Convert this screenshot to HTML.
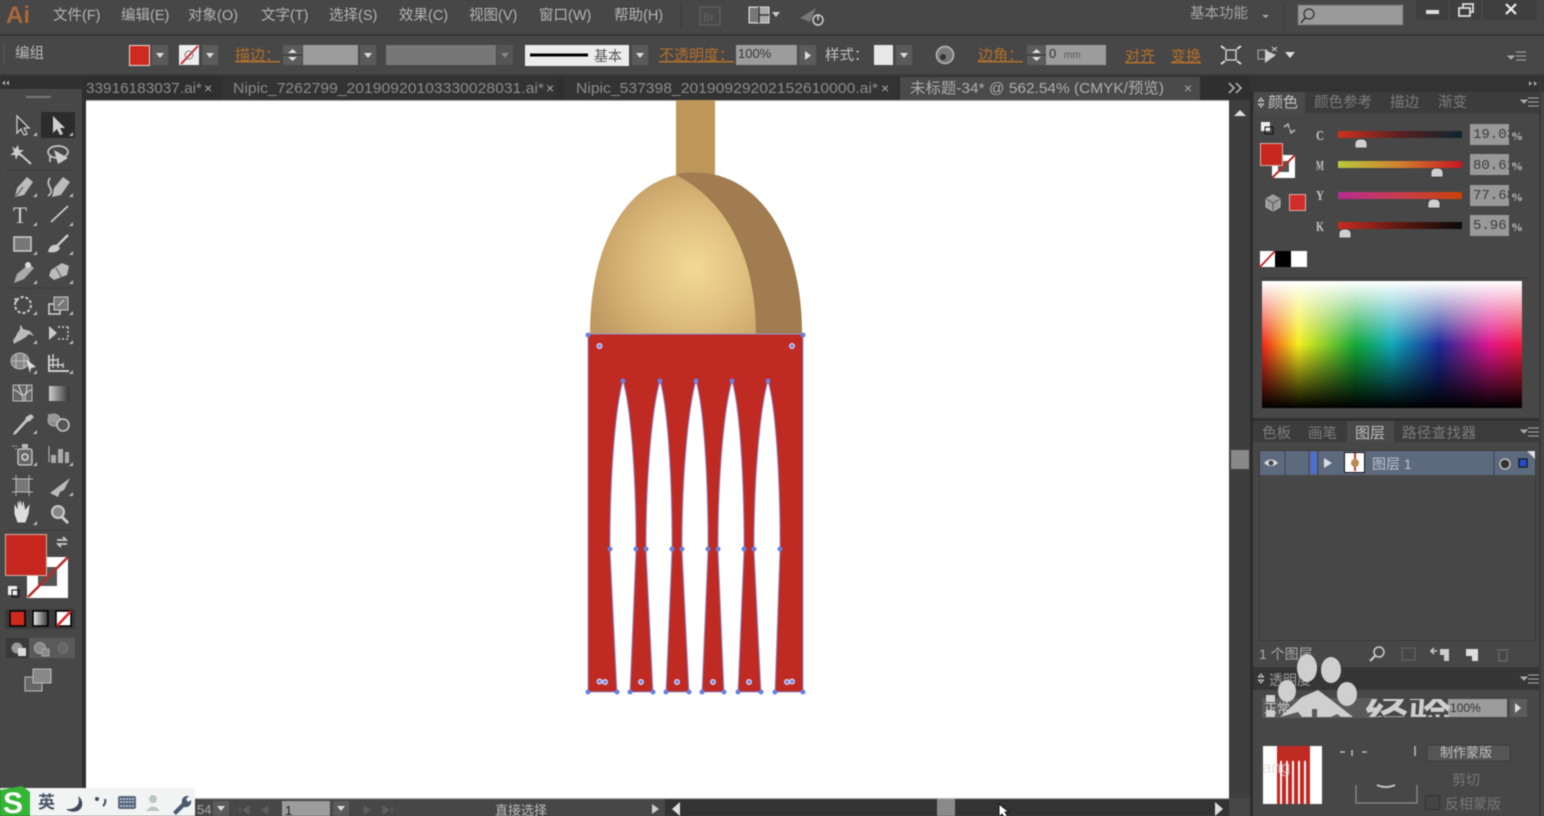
<!DOCTYPE html>
<html><head><meta charset="utf-8">
<style>
html,body{margin:0;padding:0;background:#474747;width:1544px;height:816px;overflow:hidden}
svg{display:block;position:absolute;left:0;top:0;filter:blur(.45px)}
text{font-family:"Liberation Sans","Noto Sans CJK SC",sans-serif}
.m{font-size:14.500px;fill:#b4b4b4}
.o{font-size:15px;fill:#b5702a;text-decoration:underline}
.t{font-size:15px;fill:#8b8b8b}
.p{font-size:14.500px;fill:#7c7c7c}
.s{font-family:"Liberation Serif","Noto Serif CJK SC",serif;font-size:14px;fill:#c4c4c4;font-weight:bold}
.v{font-family:"Liberation Mono",monospace;font-size:14px;fill:#3c3c3c}
.i{fill:none;stroke:#c6c6c6;stroke-width:1.7}
.f{fill:#c6c6c6}
.d{fill:#5a5a5a}
</style></head><body>
<svg width="1544" height="816" viewBox="0 0 1544 816" xmlns="http://www.w3.org/2000/svg">
<defs>
<radialGradient id="dome" gradientUnits="userSpaceOnUse" cx="694" cy="268" r="112"><stop offset="0" stop-color="#f3d894"/><stop offset=".45" stop-color="#e0c081"/><stop offset="1" stop-color="#bf9960"/></radialGradient>
<linearGradient id="hue"><stop offset="0" stop-color="#f0241c"/><stop offset=".14" stop-color="#f6ee1c"/><stop offset=".36" stop-color="#12a838"/><stop offset=".5" stop-color="#10a8b8"/><stop offset=".68" stop-color="#1c2a98"/><stop offset=".88" stop-color="#e4168c"/><stop offset="1" stop-color="#ee1c3c"/></linearGradient>
<linearGradient id="wb" x2="0" y2="1"><stop offset="0" stop-color="#fff"/><stop offset=".5" stop-color="#fff" stop-opacity="0"/><stop offset=".5" stop-color="#000" stop-opacity="0"/><stop offset="1" stop-color="#000"/></linearGradient>
<linearGradient id="sc"><stop offset="0" stop-color="#d0301e"/><stop offset=".5" stop-color="#5a2020"/><stop offset="1" stop-color="#0c2530"/></linearGradient>
<linearGradient id="sm"><stop offset="0" stop-color="#b8c83c"/><stop offset=".5" stop-color="#d08030"/><stop offset="1" stop-color="#c8141e"/></linearGradient>
<linearGradient id="sy"><stop offset="0" stop-color="#b82c94"/><stop offset=".5" stop-color="#c83c4c"/><stop offset="1" stop-color="#cc4208"/></linearGradient>
<linearGradient id="sk"><stop offset="0" stop-color="#c82c20"/><stop offset=".5" stop-color="#601810"/><stop offset="1" stop-color="#0a0a0a"/></linearGradient>
<linearGradient id="gr"><stop offset="0" stop-color="#eee"/><stop offset="1" stop-color="#333"/></linearGradient>
<clipPath id="wm"><rect x="1360" y="699" width="95" height="18"/></clipPath>
<g id="dd"><rect x="0" y="0" width="16" height="20" fill="#5b5b5b"/><path d="M4 8h8l-4 5z" fill="#ddd"/></g>
<g id="sp"><rect x="0" y="0" width="19" height="20" fill="#5b5b5b"/><path d="M5 8l4.500-4 4.500 4zM5 12h9l-4.500 4z" fill="#ddd"/><path d="M0 10h19" stroke="#333"/></g>
<path id="cn" d="M0 0h4v-4z" fill="#bbb"/>
<path id="th" d="M-6 5v-4q0-5 6-5t6 5v4z" fill="#cfcfcf" stroke="#333" stroke-width=".7"/>
</defs>

<rect width="1544" height="816" fill="#474747"/>

<!-- menu bar -->
<rect x="0" y="34" width="1544" height="2" fill="#363636"/>
<text x="6" y="23" font-size="24" font-weight="bold" fill="#a8683a">Ai</text>
<g class="m">
<text class="m" x="53" y="20">文件(F)</text><text class="m" x="121" y="20">编辑(E)</text><text class="m" x="188" y="20">对象(O)</text><text class="m" x="261" y="20">文字(T)</text><text class="m" x="329" y="20">选择(S)</text><text class="m" x="399" y="20">效果(C)</text><text class="m" x="469" y="20">视图(V)</text><text class="m" x="539" y="20">窗口(W)</text><text class="m" x="614" y="20">帮助(H)</text>
</g>
<path d="M681 2v26" stroke="#3a3a3a"/>
<rect x="700" y="7" width="20" height="18" fill="#4a4a4a" stroke="#666"/><text x="703" y="21" font-size="11" fill="#666">Br</text>
<rect x="749" y="7" width="20" height="16" fill="#aaa" stroke="#ddd"/><path d="M759 7v16M759 15h10" stroke="#333" stroke-width="1.500"/><rect x="750" y="8" width="8" height="14" fill="#777"/>
<path d="M772 12h8l-4 5z" fill="#ccc"/>
<path d="M800 18l16-10-6 14z" fill="#777"/><circle cx="818" cy="20" r="5" fill="none" stroke="#ccc" stroke-width="1.500"/><path d="M818 14v6" stroke="#ccc" stroke-width="1.500"/>
<text class="m" x="1190" y="18" style="fill:#a5a5a5">基本功能</text><path d="M1262 15h7l-3.500 3z" fill="#aaa"/>
<path d="M1284 3v28" stroke="#3c3c3c"/>
<rect x="1298" y="5" width="105" height="20" fill="#9a9a9a" stroke="#6a6a6a"/>
<circle cx="1309" cy="14" r="5" fill="none" stroke="#333" stroke-width="1.300"/><path d="M1305 18l-4 5" stroke="#333" stroke-width="1.500"/>
<rect x="1416" y="0" width="121" height="20" fill="#3f3f3f"/>
<path d="M1449 0v20M1482 0v20" stroke="#4e4e4e"/>
<rect x="1426" y="10" width="13" height="4" fill="#ddd"/>
<path d="M1459 8h11v8h-11zM1463 8v-4h10v8h-3" fill="none" stroke="#ddd" stroke-width="1.800"/>
<path d="M1506 4l10 10M1516 4l-10 10" stroke="#eee" stroke-width="2.200"/>

<!-- control bar -->
<g opacity=".8"><path d="M4 44v20" stroke="#6a6a6a" stroke-width="2" stroke-dasharray="1 2"/></g>
<text class="m" x="15" y="58" style="fill:#bbb">编组</text>
<rect x="129.500" y="45.500" width="20" height="20" fill="#cf2a1f" stroke="#e8dcd8"/>
<use href="#dd" x="152" y="45"/>
<rect x="179" y="45" width="20" height="20" fill="#eee"/><path d="M181 64l17-18" stroke="#c22" stroke-width="1.800"/><circle cx="189" cy="55" r="4" fill="none" stroke="#777"/>
<use href="#dd" x="202" y="45"/>
<text class="o" x="235" y="60">描边：</text>
<use href="#sp" x="283" y="45"/>
<rect x="303" y="45" width="55" height="20" fill="#9c9c9c"/>
<use href="#dd" x="360" y="45"/>
<rect x="386" y="45" width="110" height="20" fill="#777"/>
<rect x="497" y="45" width="16" height="20" fill="#555"/><path d="M501 53h8l-4 5z" fill="#888"/>
<rect x="525" y="45" width="104" height="21" fill="#ececec"/>
<rect x="530" y="53.500" width="58" height="3" fill="#000"/>
<text x="594" y="61" font-size="14" fill="#555">基本</text>
<use href="#dd" x="632" y="45"/>
<text class="o" x="659" y="60">不透明度：</text>
<rect x="736" y="45" width="61" height="20" fill="#9c9c9c"/>
<text x="738" y="58" font-size="13" fill="#383838">100%</text>
<rect x="799" y="45" width="17" height="20" fill="#5b5b5b"/><path d="M805 51l6 4.500-6 4.500z" fill="#ddd"/>
<text class="m" x="825" y="60" style="fill:#c0c0c0">样式：</text>
<rect x="874" y="45" width="19" height="20" fill="#e8e8e8"/>
<use href="#dd" x="896" y="45"/>
<circle cx="945" cy="55" r="8.500" fill="#777" stroke="#bbb" stroke-width="1.500"/><circle cx="943" cy="57" r="3" fill="#333"/>
<text class="o" x="978" y="60">边角：</text>
<use href="#sp" x="1027" y="45"/>
<rect x="1046" y="45" width="60" height="20" fill="#9c9c9c"/>
<text x="1049" y="58" font-size="13" fill="#333">0</text><text x="1064" y="58" font-size="10" fill="#555">mm</text>
<text class="o" x="1125" y="61">对齐</text><text class="o" x="1171" y="61">变换</text>
<path d="M1226 50h10v10h-10z" fill="none" stroke="#ddd" stroke-width="1.300"/>
<path d="M1221 46l4 3M1241 46l-4 3M1221 64l4-3M1241 64l-4-3" stroke="#ddd" stroke-width="2"/>
<path d="M1258 50h9v9h-9z" fill="none" stroke="#aaa"/><path d="M1265 50l11 5-11 8z" fill="#ccc"/><path d="M1272 47l5 4M1272 51l5-4" stroke="#ccc"/>
<path d="M1285 52h10l-5 6z" fill="#ddd"/>
<path d="M1508 56h6l-3 3zM1516 52h10M1516 56h10M1516 60h10" stroke="#aaa" fill="#aaa"/>

<!-- tab row -->
<rect x="0" y="74" width="1544" height="2" fill="#3a3a3a"/>
<rect x="82" y="76" width="1168" height="24" fill="#2f2f2f"/>
<rect x="222" y="76" width="336" height="24" fill="#333"/>
<rect x="565" y="76" width="332" height="24" fill="#333"/>
<rect x="900" y="77" width="300" height="23" fill="#4a4a4a"/>
<text class="t" x="86" y="93" textLength="116" lengthAdjust="spacingAndGlyphs">33916183037.ai*</text><text x="204" y="93" font-size="14" fill="#aaa">×</text>
<text class="t" x="233" y="93" textLength="311" lengthAdjust="spacingAndGlyphs">Nipic_7262799_20190920103330028031.ai*</text><text x="546" y="93" font-size="14" fill="#aaa">×</text>
<text class="t" x="576" y="93" textLength="302" lengthAdjust="spacingAndGlyphs">Nipic_537398_20190929202152610000.ai*</text><text x="881" y="93" font-size="14" fill="#aaa">×</text>
<text x="910" y="93" font-size="15" fill="#adadad" textLength="254" lengthAdjust="spacingAndGlyphs">未标题-34* @ 562.54% (CMYK/预览)</text>
<text x="1184" y="93" font-size="14" fill="#aaa">×</text>
<path d="M1229 83l5 5-5 5M1236 83l5 5-5 5" fill="none" stroke="#bbb" stroke-width="1.500"/>

<!-- canvas -->
<rect x="86" y="100" width="1143" height="698" fill="#fff"/>
<rect x="82" y="100" width="4" height="716" fill="#2f2f2f"/>
<rect x="86" y="100" width="1143" height="1" fill="#aaa"/>

<!-- artwork -->
<rect x="676" y="100" width="39" height="78" fill="#bd9659"/>
<path d="M590 334C590 240 630 173 695 173C760 173 802 240 802 334Z" fill="url(#dome)"/>
<path d="M676 175C684 172 690 172.500 695 172.500C760 172.500 802 240 802 334H756C756 270 735 205 676 175Z" fill="#a07c50"/>
<path d="M588 334H803V692H775L780 549C780 470 775 405 768 381C761 405 754 470 754 549L761 692H738L744 549C744 470 739 405 732 381C725 405 718 470 718 549L724 692H702L708 549C708 470 703 405 696 381C689 405 682 470 682 549L689 692H666L672 549C672 470 667 405 660 381C653 405 646 470 646 549L653 692H630L636 549C636 470 630 405 623 381C616 405 610 470 610 549L617 692H588Z" fill="#bf2a22" stroke="#8f96dc" stroke-width="1"/>
<g fill="#6a7fe0">
<circle cx="588" cy="335" r="2.500"/><circle cx="803" cy="335" r="2.500"/>
<circle cx="623" cy="381" r="2.500"/><circle cx="660" cy="381" r="2.500"/><circle cx="696" cy="381" r="2.500"/><circle cx="732" cy="381" r="2.500"/><circle cx="768" cy="381" r="2.500"/>
<circle cx="610" cy="549" r="2.500"/><circle cx="636" cy="549" r="2.500"/><circle cx="646" cy="549" r="2.500"/><circle cx="672" cy="549" r="2.500"/><circle cx="682" cy="549" r="2.500"/><circle cx="708" cy="549" r="2.500"/><circle cx="718" cy="549" r="2.500"/><circle cx="744" cy="549" r="2.500"/><circle cx="754" cy="549" r="2.500"/><circle cx="780" cy="549" r="2.500"/>
<circle cx="588" cy="692" r="2.500"/><circle cx="617" cy="692" r="2.500"/><circle cx="630" cy="692" r="2.500"/><circle cx="653" cy="692" r="2.500"/><circle cx="666" cy="692" r="2.500"/><circle cx="689" cy="692" r="2.500"/><circle cx="702" cy="692" r="2.500"/><circle cx="724" cy="692" r="2.500"/><circle cx="738" cy="692" r="2.500"/><circle cx="761" cy="692" r="2.500"/><circle cx="775" cy="692" r="2.500"/><circle cx="803" cy="692" r="2.500"/>
</g>
<g fill="#6a7fe0" stroke="#d5d8f5" stroke-width="1.300">
<circle cx="599.500" cy="346" r="2.300"/><circle cx="792" cy="346" r="2.300"/>
<circle cx="599.500" cy="681.500" r="2.300"/><circle cx="605" cy="682" r="2.300"/><circle cx="641" cy="682" r="2.300"/><circle cx="677" cy="682" r="2.300"/><circle cx="713" cy="682" r="2.300"/><circle cx="749" cy="682" r="2.300"/><circle cx="787" cy="682" r="2.300"/><circle cx="792" cy="681.500" r="2.300"/>
</g>

<!-- left toolbar -->
<rect x="0" y="76" width="82" height="13" fill="#303030"/>
<path d="M2 83l3-2.500v5zM6 83l3-2.500v5z" fill="#aaa"/>
<rect x="26" y="96" width="25" height="2" fill="#777"/>
<rect x="41" y="112" width="34" height="26" fill="#2c2c2c"/>
<path d="M7 170h66M7 288h66M7 530h66" stroke="#3c3c3c"/>
<!-- row 1 -->
<path d="M17 116l0 17 4-4 3 6 3-1-3-6h5z" fill="#3a3a3a" stroke="#ccc" stroke-width="1.300"/>
<path d="M53 116l0 17 4-4 3 6 3-1-3-6h5z" fill="#d0d0d0"/>
<!-- row 2 -->
<path d="M12 146l3 3 3-4 1 5 5 0-4 3 3 4-5-2-2 5-1-5-5 0 4-3z" fill="#ccc"/><path d="M20 154l11 10" stroke="#ccc" stroke-width="2"/>
<ellipse cx="58" cy="152" rx="10" ry="6" class="i"/><path d="M54 150l14 8-10 6z" fill="#ccc"/><path d="M50 156v6" class="i"/>
<!-- row 3 -->
<path d="M27 177l6 5-9 13-9 2 2-9z" fill="#bbb"/><path d="M16 196l7-9" stroke="#444"/>
<path d="M63 177l7 5-9 13-9 2 2-9z" fill="#bbb"/><path d="M50 178c-4 6 0 8 1 12s-2 5-3 6" class="i"/>
<!-- row 4 -->
<text x="13" y="223" fill="#ccc" style="font-family:'Liberation Serif',serif;font-size:23px">T</text>
<path d="M51 222l17-16" stroke="#ccc" stroke-width="1.700"/>
<!-- row 5 -->
<rect x="14" y="237" width="17" height="14" fill="#777" stroke="#ccc" stroke-width="1.500"/>
<path d="M68 235l-11 11" stroke="#ccc" stroke-width="2.500"/><path d="M48 252c1-5 4-8 9-7l3 3c-2 4-6 5-12 4z" fill="#ccc"/>
<!-- row 6 -->
<path d="M29 264l5 4-10 11-10 4 3-9z" fill="#aaa"/><circle cx="28" cy="265" r="3" fill="#ddd"/>
<path d="M51 270l11-7 7 3-2 9-13 5-5-4z" fill="#bbb"/><path d="M56 268l6 10" stroke="#555"/>
<!-- row 7 -->
<circle cx="23" cy="305" r="8" fill="none" stroke="#ccc" stroke-width="2" stroke-dasharray="3 2"/><path d="M14 298l5 1-3 4z" fill="#ccc"/>
<rect x="49" y="304" width="11" height="10" class="i" stroke-width="1.200"/><rect x="54" y="297" width="14" height="13" fill="#777" stroke="#ccc"/><path d="M58 306l6-6" stroke="#ddd"/>
<!-- row 8 -->
<path d="M13 340c3-2 3-6 6-9 2-4 0-5 2-6l2 4 7 2 4 5-5-2-3 3-5 3-4 2-3 2z" fill="#bbb"/>
<path d="M49 326l8 7-8 7z" fill="#ccc"/><path d="M58 327h10M58 339h10M68 327v12" stroke="#ccc" stroke-dasharray="2 2" stroke-width="1.500" fill="none"/>
<!-- row 9 -->
<ellipse cx="20" cy="361" rx="9" ry="8" fill="#888" stroke="#bbb"/><path d="M12 361h16M16 354v14M24 354v14" stroke="#ccc" stroke-width=".8"/><path d="M26 359l10 8-5 1-1 5z" fill="#ddd"/>
<path d="M49 355v16h20" fill="none" stroke="#ccc" stroke-width="2"/><path d="M53 354v14M58 358v10M63 363v5M49 360h8M49 365h14" stroke="#ccc" stroke-width="1.500"/>
<!-- row 10 -->
<rect x="13" y="385" width="19" height="16" fill="#666" stroke="#bbb"/><path d="M13 390c6 0 6 5 10 5s4-5 9-5M19 385c0 6 4 6 4 16M27 385c0 5-2 8-2 16" fill="none" stroke="#ddd"/>
<rect x="49" y="386" width="20" height="15" fill="url(#gr)" opacity=".8"/>
<!-- row 11 -->
<path d="M31 414l3 3-4 4-3 1-11 12-3 1 1-3 11-12 1-3z" fill="#c4c4c4"/>
<circle cx="54" cy="420" r="6" fill="#888" stroke="#bbb"/><circle cx="63" cy="425" r="6" fill="#555" stroke="#ccc" stroke-width="1.500"/><rect x="48" y="414" width="9" height="8" fill="#999"/>
<!-- row 12 -->
<rect x="18" y="449" width="14" height="16" rx="2" fill="#666" stroke="#ccc" stroke-width="1.300"/><circle cx="25" cy="457" r="3" fill="none" stroke="#ddd" stroke-width="1.500"/><rect x="22" y="444" width="6" height="4" fill="#bbb"/><path d="M12 446h5M15 449h4" stroke="#aaa" stroke-dasharray="2 1"/>
<path d="M49 462v-16" stroke="#bbb"/><rect x="51" y="455" width="5" height="8" fill="#aaa"/><rect x="58" y="449" width="5" height="14" fill="#aaa"/><rect x="65" y="452" width="4" height="11" fill="#aaa"/>
<!-- row 13 -->
<rect x="16" y="479" width="13" height="13" fill="#777" stroke="#aaa"/><path d="M12 479h21M12 492h21M16 475v21M29 475v21" stroke="#bbb" stroke-width=".9"/>
<path d="M50 493l20-15-6 12-4 2-2 5z" fill="#bbb"/>
<!-- row 14 -->
<path d="M15 514v-8l3 5v-9l2 8v-9l3 9v-8l2 9 4-5-1 8-3 8h-7z" fill="#ddd" stroke="#ddd"/>
<circle cx="58" cy="512" r="6" fill="#888" stroke="#ccc" stroke-width="2"/><path d="M62 517l6 6" stroke="#ccc" stroke-width="3"/>
<g><use href="#cn" x="33" y="136"/><use href="#cn" x="69" y="136"/><use href="#cn" x="33" y="197"/><use href="#cn" x="69" y="197"/><use href="#cn" x="33" y="226"/><use href="#cn" x="69" y="226"/><use href="#cn" x="33" y="255"/><use href="#cn" x="69" y="255"/><use href="#cn" x="33" y="284"/><use href="#cn" x="69" y="284"/><use href="#cn" x="33" y="315"/><use href="#cn" x="69" y="315"/><use href="#cn" x="33" y="344"/><use href="#cn" x="69" y="344"/><use href="#cn" x="33" y="374"/><use href="#cn" x="69" y="374"/><use href="#cn" x="33" y="434"/><use href="#cn" x="33" y="466"/><use href="#cn" x="69" y="466"/><use href="#cn" x="69" y="496"/><use href="#cn" x="33" y="525"/></g>
<!-- fill/stroke -->
<rect x="27" y="557" width="41" height="41" fill="#fff"/><rect x="38" y="567" width="19" height="19" fill="#555"/>
<path d="M28 597l40-40" stroke="#b82a28" stroke-width="2.500"/>
<rect x="5.500" y="534.500" width="41" height="41" fill="#c5271f" stroke="#d8b0a0"/>
<path d="M57 540h9l-3-3M67 544h-9l3 3" fill="none" stroke="#ccc" stroke-width="1.800"/>
<rect x="8" y="586" width="9" height="9" fill="#eee"/><rect x="12" y="590" width="7" height="7" fill="none" stroke="#111"/>
<!-- modes -->
<rect x="5" y="609" width="70" height="20" fill="#3a3a3a"/>
<rect x="10" y="611" width="15" height="15" fill="#cc2a1e" stroke="#000" stroke-width="1.500"/>
<rect x="33" y="611" width="15" height="15" fill="url(#gr)" stroke="#000" stroke-width="1.500"/>
<rect x="56" y="611" width="15" height="15" fill="#fff" stroke="#000" stroke-width="1.500"/><path d="M57 626l14-15" stroke="#d22" stroke-width="2.500"/>
<rect x="6" y="638" width="69" height="20" fill="#5a5a5a"/><rect x="6" y="638" width="23" height="20" fill="#3a3a3a"/>
<circle cx="17" cy="648" r="5.500" fill="#999"/><rect x="18" y="648" width="8" height="8" fill="#ddd"/>
<circle cx="40" cy="648" r="5.500" fill="#888" stroke="#aaa"/><rect x="42" y="649" width="7" height="7" fill="#888" stroke="#aaa"/>
<circle cx="63" cy="648" r="5" fill="#666" stroke="#777"/>
<rect x="25" y="677" width="17" height="14" fill="#666" stroke="#bbb"/><rect x="33" y="669" width="18" height="14" fill="#888" stroke="#bbb"/>

<!-- right scrollbar -->
<rect x="1229" y="100" width="21" height="698" fill="#3e3e3e"/>
<rect x="1250" y="76" width="3" height="740" fill="#2c2c2c"/>
<path d="M1234 116l6-6 6 6z" fill="#e0e0e0"/>
<rect x="1231" y="450" width="18" height="19" fill="#888"/>

<!-- right panels -->
<rect x="1250" y="76" width="294" height="16" fill="#333"/>
<path d="M1529 81l3 2.500-3 2.500zM1534 81l3 2.500-3 2.500z" fill="#aaa"/>
<rect x="1253" y="92" width="287" height="21" fill="#3c3c3c"/>
<rect x="1254" y="92" width="51" height="21" fill="#4a4a4a"/>
<path d="M1258.500 101l2.500-3 2.500 3zM1258.500 104l2.500 3 2.500-3z" fill="none" stroke="#ccc"/>
<text x="1268" y="107" font-size="15" fill="#c0c0c0">颜色</text>
<text class="p" x="1314" y="107">颜色参考</text><text class="p" x="1390" y="107">描边</text><text class="p" x="1438" y="107">渐变</text>
<path d="M1521 100h6l-3 3zM1528 98h11M1528 102h11M1528 106h11" stroke="#aaa" fill="#aaa"/>
<!-- color controls -->
<rect x="1261" y="122" width="9" height="9" fill="#eee"/><rect x="1265" y="127" width="8" height="7" fill="none" stroke="#111"/>
<path d="M1284 127l4-3 1 4M1295 130l-4 3-1-4" fill="none" stroke="#bbb" stroke-width="1.500"/>
<rect x="1272" y="155" width="23" height="23" fill="#fff"/><rect x="1278" y="161" width="11" height="11" fill="#555"/><path d="M1272 178l23-23" stroke="#b82a28" stroke-width="2"/>
<rect x="1260.500" y="143.500" width="22" height="22" fill="#c8271f" stroke="#d8b0a0"/>
<path d="M1273 195l7 4v8l-7 4-7-4v-8z" fill="#999" stroke="#bbb"/><path d="M1266 199l7 4 7-4M1273 203v8" fill="none" stroke="#555"/>
<rect x="1289.500" y="194.500" width="16" height="16" fill="#d22c2c" stroke="#d8b0a0"/>
<text class="s" x="1316" y="140" textLength="8" lengthAdjust="spacingAndGlyphs">C</text><text class="s" x="1316" y="170" textLength="8" lengthAdjust="spacingAndGlyphs">M</text><text class="s" x="1316" y="200" textLength="8" lengthAdjust="spacingAndGlyphs">Y</text><text class="s" x="1316" y="231" textLength="8" lengthAdjust="spacingAndGlyphs">K</text>
<rect x="1338" y="131" width="124" height="7" fill="url(#sc)"/>
<rect x="1338" y="161" width="124" height="7" fill="url(#sm)"/>
<rect x="1338" y="192" width="124" height="7" fill="url(#sy)"/>
<rect x="1338" y="222" width="124" height="7" fill="url(#sk)"/>
<use href="#th" x="1361" y="143"/><use href="#th" x="1437" y="172"/><use href="#th" x="1434" y="203"/><use href="#th" x="1345" y="233"/>
<rect x="1470" y="124" width="39" height="21" fill="#999"/><rect x="1470" y="154" width="39" height="21" fill="#999"/><rect x="1470" y="185" width="39" height="21" fill="#999"/><rect x="1470" y="215" width="39" height="21" fill="#999"/>
<text class="v" x="1473" y="138">19.03</text><text class="v" x="1473" y="169">80.61</text><text class="v" x="1473" y="199">77.68</text><text class="v" x="1473" y="229">5.96</text>
<rect x="1509" y="120" width="6" height="120" fill="#474747"/>
<text class="s" x="1511" y="140" style="font-size:12px">%</text><text class="s" x="1511" y="170" style="font-size:12px">%</text><text class="s" x="1511" y="201" style="font-size:12px">%</text><text class="s" x="1511" y="231" style="font-size:12px">%</text>
<rect x="1260" y="251" width="15" height="16" fill="#fff"/><path d="M1260 267l15-16" stroke="#c22" stroke-width="1.800"/>
<rect x="1275" y="251" width="16" height="16" fill="#000"/><rect x="1291" y="251" width="16" height="16" fill="#fff"/>
<path d="M1260 278h268" stroke="#363636"/>
<rect x="1262" y="281" width="260" height="127" fill="url(#hue)"/>
<rect x="1262" y="281" width="260" height="127" fill="url(#wb)"/>
<!-- layers panel -->
<rect x="1253" y="418" width="287" height="3" fill="#303030"/>
<rect x="1253" y="421" width="287" height="21" fill="#3c3c3c"/>
<rect x="1347" y="421" width="47" height="21" fill="#4a4a4a"/>
<text class="p" x="1262" y="438">色板</text><text class="p" x="1308" y="438">画笔</text><text x="1355" y="438" font-size="15" fill="#c0c0c0">图层</text><text class="p" x="1402" y="438" textLength="74">路径查找器</text>
<path d="M1521 430h6l-3 3zM1528 428h11M1528 432h11M1528 436h11" stroke="#aaa" fill="#aaa"/>
<rect x="1259.500" y="450.500" width="276" height="190" fill="#474747" stroke="#3a3a3a"/>
<rect x="1260" y="451" width="275" height="24" fill="#5d6a7e"/>
<path d="M1285 451v24M1309 451v24M1318 451v24M1494 451v24" stroke="#3c4452"/>
<path d="M1264 463q7-7 14 0q-7 6-14 0z" fill="#ddd"/><circle cx="1271" cy="463" r="2.500" fill="#444"/>
<rect x="1311" y="452" width="5" height="22" fill="#4a6edc"/>
<path d="M1324 458l8 5-8 5z" fill="#ddd"/>
<rect x="1344.500" y="452.500" width="20" height="20" fill="#fff" stroke="#111"/><path d="M1355 453v18" stroke="#c33" stroke-width="2"/><circle cx="1355" cy="463" r="4" fill="#b98a50"/>
<text x="1372" y="469" font-size="14" fill="#bcc2cc">图层 1</text>
<circle cx="1505" cy="464" r="5" fill="#333" stroke="#ccc" stroke-width="1.300"/>
<rect x="1519" y="459" width="8" height="8" fill="#2a4bd0" stroke="#123" stroke-width="1.500"/>
<path d="M1527 451h8v8z" fill="#ddd"/>
<text x="1259" y="659" font-size="14" fill="#aaa">1 个图层</text>
<circle cx="1379" cy="652" r="5" fill="none" stroke="#ccc" stroke-width="1.500"/><path d="M1375 656l-5 5" stroke="#ccc" stroke-width="2"/>
<rect x="1402" y="648" width="13" height="12" fill="none" stroke="#666"/>
<path d="M1431 651h6M1434 648l-3 3 3 3" fill="none" stroke="#ccc" stroke-width="1.500"/><path d="M1440 649h9v12h-5v-6h-4z" fill="#ccc"/>
<path d="M1466 649h12v12h-6v-5h-6z" fill="#ddd"/>
<path d="M1497 650h12M1499 652v9h8v-9" fill="none" stroke="#666" stroke-width="1.500"/>
<!-- transparency -->
<rect x="1253" y="667" width="287" height="23" fill="#363636"/>
<path d="M1258.500 677l2.500-3 2.500 3zM1258.500 680l2.500 3 2.500-3z" fill="none" stroke="#ccc"/>
<text x="1269" y="685" font-size="14" fill="#999">透明度</text>
<path d="M1521 677h6l-3 3zM1528 675h11M1528 679h11M1528 683h11" stroke="#aaa" fill="#aaa"/>
<rect x="1262" y="698" width="112" height="20" fill="#5a5a5a"/>
<text x="1264" y="713" font-size="13" fill="#ccc">正常</text>
<rect x="1448" y="699" width="59" height="18" fill="#9c9c9c"/><text x="1450" y="712" font-size="12" fill="#333">100%</text>
<rect x="1510" y="699" width="17" height="18" fill="#5b5b5b"/><path d="M1515 703l6 5-6 5z" fill="#ddd"/>
<rect x="1263" y="746" width="59" height="58" fill="#fff"/>
<path d="M1277 746h33v58h-4v-42l-1-2-1 2v42h-4v-42l-1-2-1 2v42h-4v-42l-1-2-1 2v42h-4v-42l-1-2-1 2v42h-4v-42l-1-2-1 2v42h-3z" fill="#bf2a22"/>
<text x="1262" y="773" font-size="17" fill="#d8d8d8" opacity=".75">ang</text>
<path d="M1340 752h5M1352 750v6M1362 752h5M1415 746v10" stroke="#bbb" stroke-width="1.500"/>
<rect x="1427" y="745" width="83" height="16" fill="#555" stroke="#3c3c3c"/>
<text x="1440" y="757" font-size="13" fill="#c0c0c0">制作蒙版</text>
<text x="1452" y="785" font-size="14" fill="#777">剪切</text>
<path d="M1356 785v18h61v-18" fill="none" stroke="#8a8a8a" stroke-width="1.300"/>
<path d="M1377 785q9 4 18 0" fill="none" stroke="#ccc" stroke-width="1.800"/>
<rect x="1425.500" y="795.500" width="14" height="14" fill="#444" stroke="#333"/>
<text x="1445" y="809" font-size="14" fill="#777">反相蒙版</text>
<path d="M1540 76v740" stroke="#3a3a3a" stroke-width="2"/>
<!-- watermark -->
<g fill="#cfcfcf">
<ellipse cx="1307" cy="668" rx="10" ry="14"/><ellipse cx="1331" cy="670" rx="10" ry="13"/><ellipse cx="1287" cy="691" rx="9" ry="11"/><ellipse cx="1347" cy="694" rx="10" ry="12"/>
<path d="M1280 717l22-20 16-7 12 9 23 18h-12l-4-3-6 3h-14v-8h-5v8h-10l-4-5z"/>
<rect x="1266" y="695" width="9" height="7"/><rect x="1266" y="710" width="9" height="7"/>
<text x="1365" y="731" clip-path="url(#wm)" fill="#cfcfcf" style="font-size:43px;font-weight:bold">经验</text>
</g>

<!-- status bar -->
<rect x="86" y="798" width="1143" height="1" fill="#bbb"/>
<rect x="86" y="799" width="1164" height="17" fill="#474747"/>
<text x="197" y="814" font-size="13" fill="#aaa">54</text>
<rect x="213" y="801" width="16" height="15" fill="#5b5b5b"/><path d="M217 806h8l-4 5z" fill="#ddd"/>
<path d="M240 806v8M249 806l-6 4 6 4zM268 806l-6 4 6 4zM364 806l6 4-6 4zM383 806l6 4-6 4zM392 806v8" fill="#5e5e5e" stroke="#5e5e5e"/>
<rect x="282" y="801" width="48" height="15" fill="#9c9c9c"/><text x="285" y="815" font-size="13" fill="#222">1</text>
<rect x="333" y="801" width="16" height="15" fill="#5b5b5b"/><path d="M337 806h8l-4 5z" fill="#ddd"/>
<text x="495" y="815" font-size="13" fill="#bbb">直接选择</text>
<path d="M652 804l7 5-7 5z" fill="#ccc"/>
<rect x="665" y="799" width="564" height="17" fill="#333"/>
<path d="M680 802l-8 7 8 7zM1215 802l8 7-8 7z" fill="#ddd"/>
<rect x="937" y="799" width="18" height="17" fill="#8a8a8a"/>
<path d="M999 804v13l3-3 2 3h4l-3-5h4z" fill="#fff" stroke="#111"/>
<!-- IME bar -->
<rect x="0" y="788" width="195" height="28" fill="#f2f4f4"/>
<path d="M0 790l22-4 8 6v24H0z" fill="#35b534"/>
<text x="3" y="813" font-size="30" font-weight="bold" fill="#fff">S</text>
<text x="38" y="808" font-size="17" font-weight="bold" fill="#4a5566">英</text>
<path d="M78 796c3 8-2 14-12 13 4 4 14 4 16-3 1-4-1-8-4-10z" fill="#3f4a5a"/>
<circle cx="97" cy="799" r="2" fill="#3f4a5a"/><path d="M105 799c1 3 0 5-2 7" fill="none" stroke="#3f4a5a" stroke-width="2"/>
<rect x="118" y="796" width="18" height="13" rx="2" fill="#5a6a80"/><path d="M120 799h14M120 802h14M120 806h14" stroke="#e8ecf0" stroke-dasharray="2 1"/>
<circle cx="153" cy="799" r="4" fill="#b8c8c0"/><path d="M146 811q7-9 14 0z" fill="#b8c8c0"/>
<path d="M173 812l9-9c-1-4 2-8 7-7l-3 3 2 3 3-2c1 5-3 8-7 7l-8 8z" fill="#4a5a70"/>
</svg>
</body></html>
